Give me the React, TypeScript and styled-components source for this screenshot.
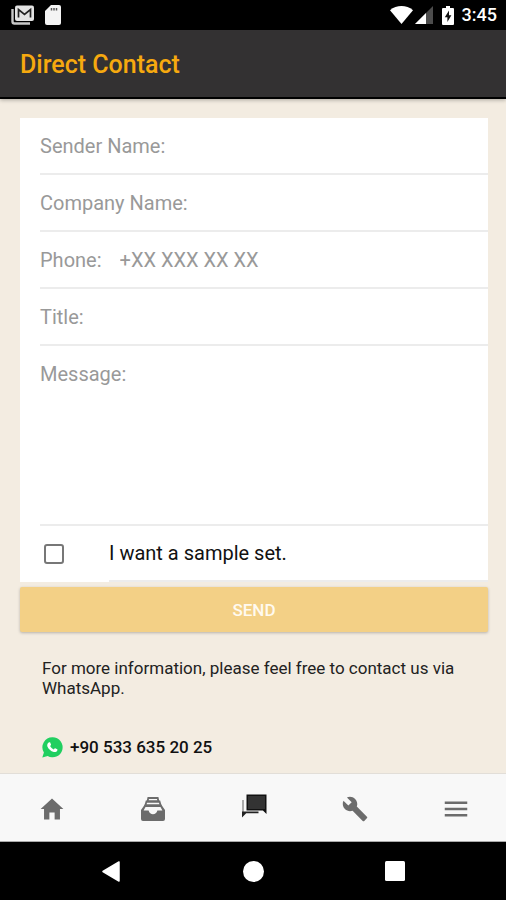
import React from "react";
import styled, { createGlobalStyle } from "styled-components";
import { IoMdHome, IoMdBuild, IoMdMenu } from "react-icons/io";

const GlobalStyle = createGlobalStyle`
  *, *::before, *::after { box-sizing: border-box; }
  body {
    margin: 0;
    background: #f3ece1;
    font-family: Roboto, "Liberation Sans", sans-serif;
  }
`;

const Screen = styled.div`
  display: flex;
  flex-direction: column;
  min-height: 100vh;
`;

const StatusBar = styled.div`
  display: flex;
  align-items: center;
  justify-content: space-between;
  height: 30px;
  padding: 0 9px 0 11px;
  background: #000;
  color: #fff;
`;

const StatusGroup = styled.div<{ $gap: number }>`
  display: flex;
  align-items: center;
  gap: ${(p) => p.$gap}px;
`;

const Clock = styled.span`
  font-size: 18px;
  line-height: 20px;
  font-weight: 500;
`;

const Header = styled.header`
  display: flex;
  align-items: center;
  height: 69px;
  padding: 3px 20px 0;
  background: #333132;
  border-bottom: 2px solid #000;
  box-shadow: 0 1px 4px rgba(0, 0, 0, 0.3);
`;

const Title = styled.h1`
  margin: 0;
  color: #f6a90f;
  font-size: 25px;
  line-height: 30px;
  font-weight: 500;
`;

const Content = styled.main`
  flex: 1;
  padding: 19px 18px 12px 20px;
`;

const Card = styled.div`
  padding-left: 20px;
  background: #fff;
`;

const Row = styled.div<{ $tall?: boolean }>`
  display: flex;
  gap: 18px;
  height: ${(p) => (p.$tall ? 180 : 57)}px;
  padding-top: 16px;
  border-bottom: 2px solid #ececec;
`;

const Label = styled.label`
  color: #999;
  font-size: 20px;
  line-height: 24px;
  white-space: nowrap;
`;

const TextInput = styled.input`
  flex: 1;
  min-width: 0;
  height: 24px;
  padding: 0;
  border: 0;
  outline: 0;
  background: transparent;
  color: #222;
  font: inherit;
  font-size: 20px;
  line-height: 24px;
  &::placeholder { color: #999; opacity: 1; }
`;

const MessageArea = styled.textarea`
  flex: 1;
  min-width: 0;
  padding: 0;
  border: 0;
  outline: 0;
  resize: none;
  background: transparent;
  color: #222;
  font: inherit;
  font-size: 20px;
  line-height: 24px;
`;

const CheckRow = styled.div`
  display: flex;
  align-items: center;
  height: 56px;
  padding-left: 4px;
`;

const Checkbox = styled.input`
  appearance: none;
  flex: none;
  width: 20px;
  height: 20px;
  margin: 0 45px 0 0;
  border: 2px solid #777;
  border-radius: 3px;
  background: #fff;
  &:checked { background: #f6a90f; border-color: #f6a90f; }
`;

const CheckLabel = styled.label`
  flex: 1;
  height: 56px;
  border-bottom: 2px solid #ececec;
  color: #111;
  font-size: 20px;
  line-height: 54px;
`;

const SendButton = styled.button`
  display: block;
  width: 100%;
  height: 45px;
  margin-top: 5px;
  padding: 0;
  border: 0;
  border-radius: 2px;
  background: #f3d086;
  box-shadow: 0 1px 3px rgba(0, 0, 0, 0.25);
  color: #fffaf0;
  font: inherit;
  font-size: 17px;
  font-weight: 500;
`;

const Info = styled.section`
  padding: 26px 20px 0 22px;
`;

const Note = styled.p`
  margin: 0 0 38px;
  color: #222;
  font-size: 17px;
  line-height: 20px;
`;

const PhoneLink = styled.a`
  display: flex;
  width: fit-content;
  align-items: center;
  gap: 7px;
  color: #111;
  font-size: 17px;
  line-height: 22px;
  font-weight: 500;
  text-decoration: none;
`;

const TabBar = styled.nav`
  display: grid;
  grid-template-columns: repeat(5, 1fr);
  height: 69px;
  padding-left: 2px;
  background: #f8f8f8;
  border-top: 1px solid #e2ded8;
  border-bottom: 1px solid #aaa;
`;

const Tab = styled.button<{ $active?: boolean }>`
  display: flex;
  align-items: center;
  justify-content: center;
  padding: ${(p) => (p.$active ? "0 0 4px" : "2px 0 0")};
  border: 0;
  background: transparent;
  color: ${(p) => (p.$active ? "#222" : "#6c6c6c")};
`;

const SystemBar = styled.div`
  display: grid;
  grid-template-columns: repeat(3, 142px);
  justify-content: center;
  height: 58px;
  background: #000;
`;

const SystemButton = styled.button`
  display: flex;
  align-items: center;
  justify-content: center;
  padding: 0;
  border: 0;
  background: transparent;
`;

const GmailIcon = () => (
  <svg width="23" height="20" viewBox="0 0 23 20" aria-hidden="true">
    <path d="M1.500 4v12.500a2 2 0 0 0 2 2H19" fill="none" stroke="#c8c8c8" strokeWidth="2.400" />
    <rect x="4" y="0.500" width="19" height="15.500" rx="2" fill="#e4e4e4" />
    <path d="M7.500 12.500V4.500l6 5 6-5V12.500" fill="none" stroke="#222" strokeWidth="1.700" />
  </svg>
);

const SdIcon = () => (
  <svg width="16" height="20" viewBox="0 0 16 20" aria-hidden="true">
    <path d="M6 0h8a2 2 0 0 1 2 2v16a2 2 0 0 1-2 2H2a2 2 0 0 1-2-2V6z" fill="#f4f4f4" />
    <path d="M6.500 3v2.500M9 3v2.500M11.500 3v2.500" stroke="#555" strokeWidth="1.500" />
  </svg>
);

const WifiIcon = () => (
  <svg width="23" height="18" viewBox="0 0 23 18" aria-hidden="true">
    <path d="M0 4.200C6.500-1.300 16.500-1.300 23 4.200L11.500 18z" fill="#fff" />
  </svg>
);

const SignalIcon = () => (
  <svg width="18" height="18" viewBox="0 0 18 18" aria-hidden="true">
    <path d="M18 0v18H0z" fill="#4c4c4c" />
    <path d="M11 7v11H0z" fill="#fff" />
  </svg>
);

const BatteryIcon = () => (
  <svg width="12" height="19" viewBox="0 0 12 19" aria-hidden="true">
    <path d="M4 0h4v2h3a1 1 0 0 1 1 1v15a1 1 0 0 1-1 1H1a1 1 0 0 1-1-1V3a1 1 0 0 1 1-1h3z" fill="#fff" />
    <path d="M7 4.500L2.800 11.300H5.400V16L9.400 9.200H7z" fill="#111" />
  </svg>
);

const FilingIcon = ({ size }: { size: number }) => (
  <svg width={size} height={size} viewBox="0 0 26 26" fill="none" aria-hidden="true">
    <path d="M7.500 5.500L8.300 2h9.400l.8 3.500z" stroke="currentColor" strokeWidth="1.800" />
    <path d="M5.300 9.500l1.200-4h13l1.200 4z" stroke="currentColor" strokeWidth="1.800" />
    <path
      d="M4.800 8.600h16.400L25 14v9a2 2 0 0 1-2 2H3a2 2 0 0 1-2-2v-9zM5.500 11L3.600 14.500h5c.8 2.500 2.300 3.700 4.400 3.700s3.600-1.200 4.400-3.700h5L20.500 11z"
      fill="currentColor"
      fillRule="evenodd"
    />
  </svg>
);

const ChatIcon = ({ size }: { size: number }) => (
  <svg width={size} height={size} viewBox="0 0 26 26" fill="none" aria-hidden="true">
    <path d="M2 7v12.500" stroke="#aaa" strokeWidth="2" />
    <path d="M1 24.500V18.500h16.500v1.700H5.200z" fill="#222" />
    <path d="M5.500 1.500h20V21l-3.600-3.500H5.500z" fill="#111" />
    <path d="M7 3h17v13H7z" fill="#333" />
  </svg>
);

const WhatsAppIcon = () => (
  <svg width="21" height="21" viewBox="0 0 21 21" aria-hidden="true">
    <path d="M10.700 0.300a10 10 0 1 1-5 18.700L0.300 20.600 1.900 15.500A10 10 0 0 1 10.700 0.300z" fill="#20cf60" />
    <path
      d="M7.300 5.300c.5-.1.800 0 1 .5l.7 1.700c.1.300 0 .6-.9 1.600.8 1.600 2 2.700 3.700 3.400.8-1 1-1.400 1.400-1.200l2 1c.4.200.3.700.1 1.200-.5 1.200-2.100 1.900-3.500 1.500-3.100-.9-5.500-3-6.500-5.800-.4-1.500.5-3.600 2-3.900z"
      fill="#fff"
    />
  </svg>
);

const fields = [
  { id: "sender", label: "Sender Name:", type: "text" },
  { id: "company", label: "Company Name:", type: "text" },
  { id: "phone", label: "Phone:", type: "tel", placeholder: "+XX XXX XX XX" },
  { id: "title", label: "Title:", type: "text" },
];

const tabs = [
  { name: "Home", Icon: IoMdHome, size: 28 },
  { name: "Catalogue", Icon: FilingIcon, size: 26 },
  { name: "Contact", Icon: ChatIcon, size: 26, active: true },
  { name: "Tools", Icon: IoMdBuild, size: 28 },
  { name: "Menu", Icon: IoMdMenu, size: 30 },
];

export default function App() {
  return (
    <Screen>
      <GlobalStyle />
      <StatusBar>
        <StatusGroup $gap={11}>
          <GmailIcon />
          <SdIcon />
        </StatusGroup>
        <StatusGroup $gap={9}>
          <StatusGroup $gap={2}>
            <WifiIcon />
            <SignalIcon />
          </StatusGroup>
          <StatusGroup $gap={8}>
            <BatteryIcon />
            <Clock>3:45</Clock>
          </StatusGroup>
        </StatusGroup>
      </StatusBar>
      <Header>
        <Title>Direct Contact</Title>
      </Header>
      <Content>
        <form onSubmit={(e) => e.preventDefault()}>
          <Card>
            {fields.map((f) => (
              <Row key={f.id}>
                <Label htmlFor={f.id}>{f.label}</Label>
                <TextInput id={f.id} type={f.type} placeholder={f.placeholder} />
              </Row>
            ))}
            <Row $tall>
              <Label htmlFor="message">Message:</Label>
              <MessageArea id="message" />
            </Row>
            <CheckRow>
              <Checkbox id="sample" type="checkbox" />
              <CheckLabel htmlFor="sample">I want a sample set.</CheckLabel>
            </CheckRow>
          </Card>
          <SendButton type="submit">SEND</SendButton>
        </form>
        <Info>
          <Note>For more information, please feel free to contact us via WhatsApp.</Note>
          <PhoneLink href="tel:+905336352025">
            <WhatsAppIcon />
            +90 533 635 20 25
          </PhoneLink>
        </Info>
      </Content>
      <TabBar>
        {tabs.map(({ name, Icon, size, active }) => (
          <Tab key={name} type="button" aria-label={name} $active={active}>
            <Icon size={size} />
          </Tab>
        ))}
      </TabBar>
      <SystemBar>
        <SystemButton type="button" aria-label="Back">
          <svg width="18" height="21" viewBox="0 0 18 21">
            <path d="M17 1v19L1 10.500z" fill="#fff" stroke="#fff" strokeWidth="1.500" strokeLinejoin="round" />
          </svg>
        </SystemButton>
        <SystemButton type="button" aria-label="Home screen">
          <svg width="21" height="21" viewBox="0 0 21 21">
            <circle cx="10.500" cy="10.500" r="10.500" fill="#fff" />
          </svg>
        </SystemButton>
        <SystemButton type="button" aria-label="Recent apps">
          <svg width="20" height="20" viewBox="0 0 20 20">
            <rect width="20" height="20" rx="1.500" fill="#fff" />
          </svg>
        </SystemButton>
      </SystemBar>
    </Screen>
  );
}
